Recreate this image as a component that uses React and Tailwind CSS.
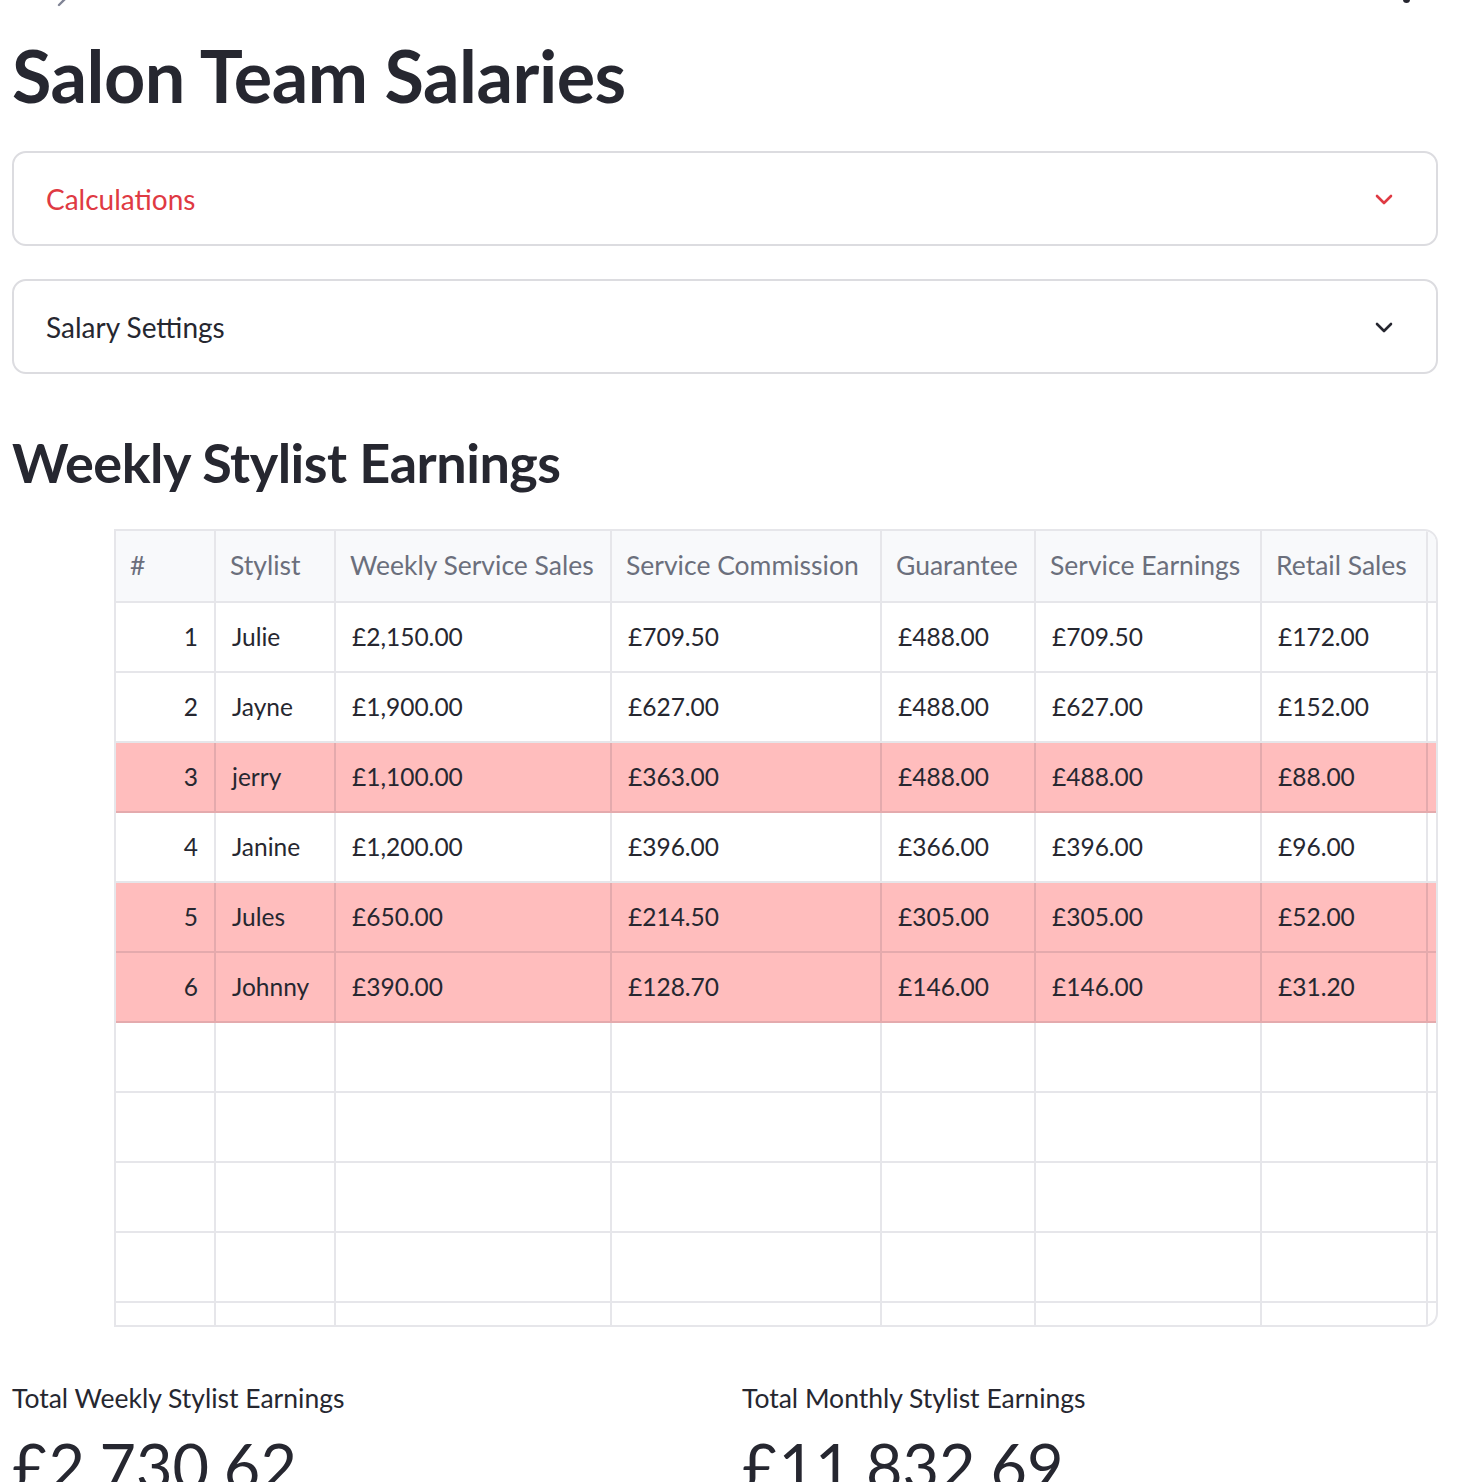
import React from "react";

const font = { fontFamily: "Lato, 'Noto Sans', sans-serif" };

const rows = [
    { n: 1, name: "Julie", sales: "£2,150.00", comm: "£709.50", guar: "£488.00", earn: "£709.50", retail: "£172.00", flag: false },
    { n: 2, name: "Jayne", sales: "£1,900.00", comm: "£627.00", guar: "£488.00", earn: "£627.00", retail: "£152.00", flag: false },
    { n: 3, name: "jerry", sales: "£1,100.00", comm: "£363.00", guar: "£488.00", earn: "£488.00", retail: "£88.00", flag: true },
    { n: 4, name: "Janine", sales: "£1,200.00", comm: "£396.00", guar: "£366.00", earn: "£396.00", retail: "£96.00", flag: false },
    { n: 5, name: "Jules", sales: "£650.00", comm: "£214.50", guar: "£305.00", earn: "£305.00", retail: "£52.00", flag: true },
    { n: 6, name: "Johnny", sales: "£390.00", comm: "£128.70", guar: "£146.00", earn: "£146.00", retail: "£31.20", flag: true },
];

const headers = ["#", "Stylist", "Weekly Service Sales", "Service Commission", "Guarantee", "Service Earnings", "Retail Sales", ""];

const cols = "grid grid-cols-[100px_120px_276px_270px_154px_226px_166px_12px]";

const Chevron = ({ color }) => (
    <svg width="24" height="24" viewBox="0 0 24 24" fill="none" stroke={color} strokeWidth="2.6" strokeLinecap="round" strokeLinejoin="round">
        <path d="M5 9l7 7 7-7" />
    </svg>
);

const Expander = ({ label, red }) => (
    <div className="h-[95px] border-2 border-[#dcdce0] rounded-[14px] flex items-center justify-between pl-[32px] pr-[40px]">
        <span className={`text-[28px] ${red ? "text-[#df3a43]" : "text-[#262730]"}`}>{label}</span>
        <Chevron color={red ? "#df3a43" : "#262730"} />
    </div>
);

const Cell = ({ children, right, flag, last }) => (
    <div
        className={`h-[70px] flex items-center px-[16px] text-[24.5px] text-[#262730] border-b-2 ${last ? "" : "border-r-2"} ${
            flag ? "bg-[#ffbdbd] border-[#e4aaad]" : "border-[#e6e6ea]"
        } ${right ? "justify-end" : ""}`}
    >
        {children}
    </div>
);

export default function App() {
    return (
        <div className="bg-white min-h-screen overflow-hidden" style={font}>
            <div className="h-[12px] relative">
                <svg className="absolute left-[50px] -top-[13px]" width="24" height="24" viewBox="0 0 24 24" fill="none" stroke="#808495" strokeWidth="2.4" strokeLinecap="round">
                    <path d="M9 6l6 6-6 6" />
                </svg>
                <div className="absolute left-[1403px] -top-[4px] w-[7px] h-[7px] rounded-full bg-[#262730]" />
            </div>
            <div className="px-[12px] pr-[20px]">
                <h1 className="text-[72px] font-bold text-[#262730] leading-none mt-[27px] tracking-[-0.5px]">Salon Team Salaries</h1>
                <div className="mt-[40px] flex flex-col gap-[33px]">
                    <Expander label="Calculations" red />
                    <Expander label="Salary Settings" />
                </div>
                <h2 className="text-[54px] font-bold text-[#262730] leading-none mt-[62px] tracking-[-0.5px]">Weekly Stylist Earnings</h2>
                <div className="ml-[102px] mt-[39px] w-[1324px] h-[798px] border-2 border-[#e6e6ea] rounded-r-[14px] overflow-hidden">
                    <div className={`${cols} bg-[#f8f9fb]`}>
                        {headers.map((h, i) => (
                            <div key={i} className={`h-[72px] flex items-center px-[14px] text-[26.5px] text-[#6b6f7c] whitespace-nowrap border-b-2 border-[#e6e6ea] ${i < 7 ? "border-r-2" : ""}`}>
                                {h}
                            </div>
                        ))}
                    </div>
                    {rows.map((r) => (
                        <div key={r.n} className={cols}>
                            <Cell right flag={r.flag}>{r.n}</Cell>
                            <Cell flag={r.flag}>{r.name}</Cell>
                            <Cell flag={r.flag}>{r.sales}</Cell>
                            <Cell flag={r.flag}>{r.comm}</Cell>
                            <Cell flag={r.flag}>{r.guar}</Cell>
                            <Cell flag={r.flag}>{r.earn}</Cell>
                            <Cell flag={r.flag}>{r.retail}</Cell>
                            <Cell flag={r.flag} last />
                        </div>
                    ))}
                    {[0, 1, 2, 3, 4].map((k) => (
                        <div key={k} className={cols}>
                            {headers.map((_, i) => (
                                <Cell key={i} last={i === 7} />
                            ))}
                        </div>
                    ))}
                </div>
                <div className="grid grid-cols-2 gap-[34px] mt-[58px]">
                    <div>
                        <div className="text-[26.5px] text-[#262730] leading-none">Total Weekly Stylist Earnings</div>
                        <div className="text-[63px] text-[#262730] leading-none mt-[22px]">£2,730.62</div>
                    </div>
                    <div>
                        <div className="text-[26.5px] text-[#262730] leading-none">Total Monthly Stylist Earnings</div>
                        <div className="text-[63px] text-[#262730] leading-none mt-[22px]">£11,832.69</div>
                    </div>
                </div>
            </div>
        </div>
    );
}
